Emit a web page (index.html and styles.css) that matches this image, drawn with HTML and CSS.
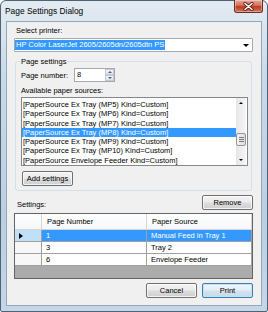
FILE: index.html
```html
<!DOCTYPE html>
<html>
	<head>
		<meta charset="utf-8">
		<title>Page Settings Dialog</title>
		<link rel="stylesheet" href="styles.css">
	</head>
	<body>
		<div class="window">
			<div class="titlebar">
				<span class="title">Page Settings Dialog</span>
				<span class="close">
					<svg width="11" height="9" viewBox="0 0 11 9">
						<path d="M2 1.5 L9 7.5 M9 1.5 L2 7.5" stroke="#5a1a10" stroke-width="3.2" stroke-linecap="round"/>
						<path d="M2 1.5 L9 7.5 M9 1.5 L2 7.5" stroke="#fff" stroke-width="1.6" stroke-linecap="round"/>
					</svg>
				</span>
			</div>
			<div class="client">
				<div class="label">Select printer:</div>
				<div class="combo">
					<span class="combo-text">HP Color LaserJet 2605/2605dn/2605dtn PS</span>
					<span class="arrow-down combo-arrow"></span>
				</div>

				<fieldset class="group">
					<legend>Page settings</legend>
					<div class="page-row">
						<span class="page-label">Page number:</span>
						<div class="spin">
							<span class="spin-value">8</span>
							<div class="spin-btns">
								<span class="spin-btn"><span class="arrow-up small"></span></span>
								<span class="spin-btn"><span class="arrow-down small"></span></span>
							</div>
						</div>
					</div>
					<div class="label sources-label">Available paper sources:</div>
					<div class="listbox">
						<ul class="items">
							<li>[PaperSource Ex Tray (MP5) Kind=Custom]</li>
							<li>[PaperSource Ex Tray (MP6) Kind=Custom]</li>
							<li>[PaperSource Ex Tray (MP7) Kind=Custom]</li>
							<li class="selected">[PaperSource Ex Tray (MP8) Kind=Custom]</li>
							<li>[PaperSource Ex Tray (MP9) Kind=Custom]</li>
							<li>[PaperSource Ex Tray (MP10) Kind=Custom]</li>
							<li>[PaperSource Envelope Feeder Kind=Custom]</li>
						</ul>
						<div class="vscroll">
							<span class="sb-btn"><span class="arrow-up"></span></span>
							<span class="sb-track top"></span>
							<span class="sb-thumb"><i></i><i></i><i></i></span>
							<span class="sb-track"></span>
							<span class="sb-btn"><span class="arrow-down"></span></span>
						</div>
					</div>
					<button class="btn add-btn">Add settings</button>
				</fieldset>

				<div class="settings-head">
					<span class="settings-label">Settings:</span>
					<button class="btn">Remove</button>
				</div>

				<div class="grid">
					<div class="grid-row head">
						<span class="rh"></span>
						<span class="cell">Page Number</span>
						<span class="cell">Paper Source</span>
					</div>
					<div class="grid-row current">
						<span class="rh"><span class="row-mark"></span></span>
						<span class="cell">1</span>
						<span class="cell">Manual Feed in Tray 1</span>
					</div>
					<div class="grid-row">
						<span class="rh"></span>
						<span class="cell">3</span>
						<span class="cell">Tray 2</span>
					</div>
					<div class="grid-row">
						<span class="rh"></span>
						<span class="cell">6</span>
						<span class="cell">Envelope Feeder</span>
					</div>
					<div class="grid-empty"></div>
				</div>

				<div class="actions">
					<button class="btn">Cancel</button>
					<button class="btn btn-default">Print</button>
				</div>
			</div>
		</div>
	</body>
</html>
```

FILE: styles.css
```css
*{
	margin: 0;
	padding: 0;
	box-sizing: border-box;
}
body{
	width: 268px;
	height: 312px;
	overflow: hidden;
	background: #fff;
	font-family: "Liberation Sans", Arial, sans-serif;
	font-size: 7.5px;
	color: #000;
}
.window{
	width: 268px;
	height: 312px;
	border: 1px solid #4f6377;
	border-radius: 6px 6px 2px 2px;
	background: linear-gradient(to bottom, #e3ebf2 0%, #c9d9e8 25%, #bccfe1 70%, #c4d6e7 100%);
	display: flex;
	flex-direction: column;
}
.titlebar{
	height: 20px;
	display: flex;
	align-items: flex-start;
}
.title{
	padding-left: 4px;
	font-size: 8.4px;
	line-height: 20px;
	color: #000;
}
.close{
	margin-left: auto;
	margin-right: 4px;
	margin-top: -1px;
	width: 29px;
	height: 13px;
	border: 1px solid #6b2a22;
	border-top: none;
	border-radius: 0 0 3px 3px;
	background: linear-gradient(to bottom, #e6a89a 0%, #d0715c 45%, #bb3a22 55%, #d2765d 100%);
	box-shadow: inset 0 0 0 1px rgba(255,255,255,.35);
	display: flex;
	align-items: center;
	justify-content: center;
}

.client{
	margin: 0 5px;
	height: 285px;
	border: 1px solid #93a8bb;
	background: #f0f0f0;
	padding: 4px 8px 0 7px;
	display: flex;
	flex-direction: column;
}
.label{
	line-height: 10px;
	height: 10px;
	padding-left: 2px;
}

.combo{
	margin-top: 2px;
	height: 14px;
	border: 1px solid #a6a9b0;
	border-radius: 1px;
	background: #fff;
	display: flex;
	align-items: flex-start;
}
.combo-text{
	margin-top: 1px;
	height: 10px;
	line-height: 10px;
	padding: 0 1px;
	background: #3399ff;
	color: #fff;
}
.combo-arrow{
	margin-left: auto;
	margin-right: 3px;
	margin-top: 5px;
}
.arrow-down{
	width: 0;
	height: 0;
	border-left: 3px solid transparent;
	border-right: 3px solid transparent;
	border-top: 3px solid #000;
}
.arrow-up{
	width: 0;
	height: 0;
	border-left: 3px solid transparent;
	border-right: 3px solid transparent;
	border-bottom: 3px solid #000;
}
.arrow-up.small{
	border-left-width: 2px;
	border-right-width: 2px;
	border-bottom: 2px solid #4d6185;
}
.arrow-down.small{
	border-left-width: 2px;
	border-right-width: 2px;
	border-top: 2px solid #4d6185;
}

.group{
	margin: 4.5px 1px 0 1px;
	border: 1px solid #d5dfe5;
	border-radius: 3px;
	padding: 0 3px 4px 5px;
	display: flex;
	flex-direction: column;
	align-items: flex-start;
}
.group legend{
	margin-left: -1px;
	padding: 0 1px;
	line-height: 9px;
	font-size: 7.5px;
}
.page-row{
	margin-top: 2.5px;
	height: 14px;
	display: flex;
	align-items: center;
}
.page-label{
	width: 53px;
}
.spin{
	width: 41px;
	height: 14px;
	border: 1px solid #a6a9b0;
	background: #fff;
	display: flex;
}
.spin-value{
	flex: 1;
	padding-left: 2px;
	line-height: 12px;
}
.spin-btns{
	width: 9px;
	display: flex;
	flex-direction: column;
}
.spin-btn{
	flex: 1;
	border: 1px solid #c2c9d4;
	background: linear-gradient(to bottom, #f4f6f9, #dde3ea);
	display: flex;
	align-items: center;
	justify-content: center;
}
.sources-label{
	margin-top: 4px;
	padding-left: 0;
}
.listbox{
	margin-top: 1px;
	width: 100%;
	height: 69px;
	border: 1px solid #828790;
	background: #fff;
	display: flex;
}
.items{
	list-style: none;
	flex: 1;
	padding-top: 2px;
}
.items li{
	height: 9.3px;
	line-height: 9.3px;
	padding-left: 1px;
	white-space: nowrap;
}
.items li.selected{
	background: #3399ff;
	color: #fff;
}
.vscroll{
	width: 10px;
	margin-right: 1px;
	background: linear-gradient(to right, #e6e6e6, #f5f5f5);
	display: flex;
	flex-direction: column;
}
.sb-btn{
	height: 10px;
	display: flex;
	align-items: center;
	justify-content: center;
}
.sb-btn .arrow-up,
.sb-btn .arrow-down{
	border-left-width: 2.5px;
	border-right-width: 2.5px;
	border-top-width: 2.5px;
	border-bottom-width: 2.5px;
}
.sb-btn .arrow-up{
	border-top: none;
}
.sb-btn .arrow-down{
	border-bottom: none;
}
.sb-track{
	flex: 1;
}
.sb-track.top{
	flex: 2.6;
}
.sb-thumb{
	height: 13px;
	border: 1px solid #959595;
	border-radius: 2px;
	background: linear-gradient(to right, #f3f3f3, #dcdcdc);
	display: flex;
	flex-direction: column;
	align-items: center;
	justify-content: center;
	gap: 1px;
}
.sb-thumb i{
	width: 5px;
	height: 1px;
	background: #7a7a7a;
}
.add-btn{
	margin-top: 5px;
	margin-left: 1px;
	width: 50px;
}

.btn{
	font-family: inherit;
	font-size: 7.5px;
	color: #000;
	width: 51px;
	height: 15px;
	border: 1px solid #707070;
	border-radius: 2px;
	background: linear-gradient(to bottom, #f3f3f3 0%, #ebebeb 48%, #dddddd 52%, #cfcfcf 100%);
	box-shadow: inset 0 0 0 1px rgba(255,255,255,.75);
}
.btn-default{
	border-color: #3c7fb1;
	background: linear-gradient(to bottom, #f2f6f9 0%, #e5eef5 48%, #d3e2ee 52%, #c6dae9 100%);
	box-shadow: inset 0 0 0 1px #bfe4f8;
}

.settings-head{
	margin-top: 4px;
	height: 15px;
	display: flex;
	align-items: flex-end;
	justify-content: space-between;
}
.settings-label{
	padding-left: 3px;
	line-height: 8px;
	margin-bottom: 1px;
}

.grid{
	margin-top: 3px;
	height: 66px;
	border: 1px solid #646464;
	background: #ababab;
	display: flex;
	flex-direction: column;
}
.grid-row{
	height: 12px;
	display: grid;
	grid-template-columns: 27px 105px 1fr;
	background: #fff;
}
.grid-row.head{
	height: 16px;
	background: linear-gradient(to bottom, #ffffff, #f4f6f8);
}
.grid-row span{
	border-right: 1px solid #a0a0a0;
	border-bottom: 1px solid #a0a0a0;
	line-height: 11px;
	white-space: nowrap;
}
.grid-row.head span{
	border-right-color: #d5d5d5;
	border-bottom-color: #d5d5d5;
	line-height: 15px;
	padding-left: 5px;
}
.grid-row .rh{
	background: #f7f7f7;
	display: flex;
	align-items: center;
}
.grid-row.head .rh{
	background: none;
}
.grid-row .cell{
	padding-left: 4px;
}
.grid-row.current .cell{
	background: #3399ff;
	color: #fff;
}
.grid-row.current .rh{
	background: #bfe0f7;
}
.row-mark{
	margin-left: 4px;
	width: 0;
	height: 0;
	border: none !important;
	border-top: 3px solid transparent !important;
	border-bottom: 3px solid transparent !important;
	border-left: 4px solid #000 !important;
}
.grid-empty{
	flex: 1;
}

.actions{
	margin-top: 4px;
	display: flex;
	justify-content: flex-end;
	gap: 5px;
}
```
